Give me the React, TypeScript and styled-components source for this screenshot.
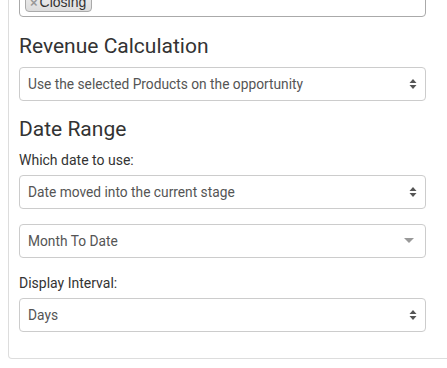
import React from "react";
import styled, { createGlobalStyle } from "styled-components";

const Global = createGlobalStyle`
  html, body { margin: 0; padding: 0; background: #fff; }
  body { font-family: Roboto, "Helvetica Neue", Arial, sans-serif; overflow: hidden; }
`;

const Page = styled.div`
  width: 447px;
  height: 368px;
  overflow: hidden;
  padding-left: 8px;
  box-sizing: border-box;
`;

const Panel = styled.div`
  width: 460px;
  border: 1px solid #ddd;
  border-top: none;
  border-radius: 0 0 0 4px;
  padding: 0 10px 26px 10px;
  box-sizing: border-box;
  display: flex;
  flex-direction: column;
`;

const TagBox = styled.div`
  margin-top: -14px;
  width: 407px;
  height: 31px;
  border: 1px solid #aaa;
  border-radius: 4px;
  box-sizing: border-box;
  padding: 4px 5px;
  display: flex;
  align-items: flex-start;
`;

const Tag = styled.span`
  display: inline-flex;
  align-items: center;
  background: linear-gradient(#eee, #ddd);
  border: 1px solid #aaa;
  border-radius: 4px;
  padding: 0 5px 0 4px;
  height: 20px;
  box-sizing: border-box;
  font-family: "Liberation Sans", Arial, sans-serif;
  font-size: 14px;
  color: #333;
  margin-top: 1px;
`;

const TagX = styled.span`
  color: #999;
  font-weight: bold;
  margin-right: 2px;
  font-size: 13px;
`;

const Heading = styled.h4<{ $mt?: number }>`
  margin: ${(p) => p.$mt ?? 18}px 0 10px 0;
  font-family: Roboto, sans-serif;
  font-weight: 400;
  font-size: 21px;
  line-height: 22px;
  color: #333;
`;

const Label = styled.label`
  display: block;
  font-family: Roboto, sans-serif;
  font-size: 14px;
  line-height: 20px;
  color: #333;
  margin-bottom: 5px;
`;

const Group = styled.div<{ $mb?: number }>`
  margin-bottom: ${(p) => p.$mb ?? 15}px;
`;

const SelectBox = styled.div`
  width: 407px;
  height: 34px;
  border: 1px solid #ccc;
  border-radius: 4px;
  box-sizing: border-box;
  padding: 0 8px 0 8px;
  display: flex;
  align-items: center;
  justify-content: space-between;
  font-family: Roboto, sans-serif;
  font-size: 13.75px;
  color: #555;
  background: #fff;
`;

const Arrow = styled.svg`
  flex: none;
`;

const Updown = () => (
  <Arrow width="8" height="12" viewBox="0 0 8 12">
    <path d="M4 1 L7.5 5 L0.5 5 Z" fill="#555" />
    <path d="M4 11 L7.5 7 L0.5 7 Z" fill="#555" />
  </Arrow>
);

const Down = () => (
  <Arrow width="10" height="6" viewBox="0 0 10 6" style={{ marginRight: 3 }}>
    <path d="M0 0 L10 0 L5 5 Z" fill="#999" />
  </Arrow>
);

const Select = ({ text, single }: { text: string; single?: boolean }) => (
  <SelectBox>
    <span>{text}</span>
    {single ? <Down /> : <Updown />}
  </SelectBox>
);

export default function App() {
  return (
    <Page>
      <Global />
      <Panel>
        <TagBox>
          <Tag>
            <TagX>×</TagX>Closing
          </Tag>
        </TagBox>
        <Heading>Revenue Calculation</Heading>
        <Group $mb={0}>
          <Select text="Use the selected Products on the opportunity" />
        </Group>
        <Heading $mt={17}>Date Range</Heading>
        <Group>
          <Label>Which date to use:</Label>
          <Select text="Date moved into the current stage" />
        </Group>
        <Group>
          <Select text="Month To Date" single />
        </Group>
        <Group $mb={0}>
          <Label>Display Interval:</Label>
          <Select text="Days" />
        </Group>
      </Panel>
    </Page>
  );
}
